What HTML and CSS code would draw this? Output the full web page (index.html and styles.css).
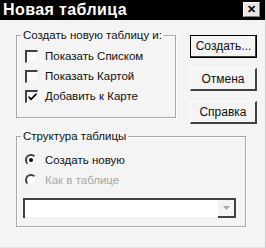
FILE: index.html
```html
<!DOCTYPE html>
<html lang="ru">

<head>
    <meta charset="UTF-8">
    <title>Новая таблица</title>
    <link rel="stylesheet" href="styles.css">
</head>

<body>
    <div class="window">
        <div class="titlebar">
            <span class="title">Новая таблица</span>
            <span class="close">&#x2715;</span>
        </div>

        <div class="content">
            <div class="toprow">
                <fieldset class="group group1">
                    <legend>Создать новую таблицу и:</legend>
                    <div class="option"><span class="check"></span>Показать Списком</div>
                    <div class="option"><span class="check"></span>Показать Картой</div>
                    <div class="option">
                        <span class="check">
                            <svg width="9" height="9" viewBox="0 0 9 9">
                                <path d="M0.5 3.5 L3 6 L8.5 0.5 L8.5 3 L3 8.5 L0.5 6 Z" fill="#000" />
                            </svg>
                        </span>Добавить к Карте
                    </div>
                </fieldset>

                <div class="buttons">
                    <div class="button default">Создать...</div>
                    <div class="button">Отмена</div>
                    <div class="button">Справка</div>
                </div>
            </div>

            <fieldset class="group group2">
                <legend>Структура таблицы</legend>
                <div class="option"><span class="radio on"></span>Создать новую</div>
                <div class="option disabled"><span class="radio"></span>Как в таблице</div>
                <div class="combo">
                    <span class="combo-text"></span>
                    <span class="combo-btn">
                        <svg width="7" height="4" viewBox="0 0 7 4">
                            <path d="M0 0 L7 0 L3.5 4 Z" fill="#a8a8a8" />
                        </svg>
                    </span>
                </div>
            </fieldset>
        </div>
    </div>
</body>

</html>
```

FILE: styles.css
```css
body {
    margin: 0;
    background: #f4f4f4;
    font-family: "Liberation Sans", Arial, sans-serif;
    font-size: 11.5px;
    color: #101010;
}

.window {
    width: 266px;
    height: 248px;
    box-sizing: border-box;
    background: #f4f4f4;
    border-right: 1px solid #d0d0d0;
    border-bottom: 1px solid #e0e0e0;
}

.titlebar {
    height: 20px;
    background: #000;
    display: flex;
    align-items: center;
    justify-content: space-between;
    padding: 0 5px 0 3px;
}

.title {
    color: #fff;
    font-weight: bold;
    font-size: 16px;
    letter-spacing: 0.4px;
}

.close {
    width: 15px;
    height: 13px;
    margin-top: -2px;
    background: #e8e8e8;
    border: 1px solid #fff;
    border-right-color: #808080;
    border-bottom-color: #808080;
    color: #000;
    font-size: 11px;
    font-weight: bold;
    line-height: 13px;
    text-align: center;
}

.content {
    padding: 9px 0 0 16px;
}

.toprow {
    display: flex;
    align-items: flex-start;
    gap: 14px;
    height: 93px;
}

.group {
    margin: 0;
    padding: 0 0 0 8px;
    border: 1px solid #a8a8a8;
    box-shadow: 1px 1px 0 #fff, inset 1px 1px 0 #fff;
}

.group legend {
    padding: 0 2px;
    margin-left: -4px;
    line-height: 12px;
}

.group1 {
    width: 150px;
    height: 82px;
    padding-top: 5px;
}

.group2 {
    width: 220px;
    height: 87px;
    margin-top: 8px;
    padding-top: 8px;
}

.option {
    display: flex;
    align-items: center;
    height: 20px;
}

.option.disabled {
    color: #a8a8a8;
}

.check {
    width: 10px;
    height: 10px;
    margin-right: 7px;
    background: #fafafa;
    border-top: 2px solid #404040;
    border-left: 2px solid #404040;
    border-right: 1px solid #f0f0f0;
    border-bottom: 1px solid #f0f0f0;
    display: flex;
    align-items: center;
    justify-content: center;
}

.radio {
    width: 8px;
    height: 8px;
    margin-right: 8px;
    border-radius: 50%;
    border: 2px solid;
    border-color: #404040 #f4f4f4 #f4f4f4 #404040;
    background: #fff;
    position: relative;
}

.radio.on::after {
    content: "";
    position: absolute;
    left: 2px;
    top: 2px;
    width: 4px;
    height: 4px;
    border-radius: 50%;
    background: #000;
}

.buttons {
    display: flex;
    flex-direction: column;
    gap: 10px;
    padding-top: 6px;
}

.button {
    width: 64px;
    height: 20px;
    line-height: 20px;
    text-align: center;
    font-size: 12px;
    border: 1px solid #fff;
    border-right: 2px solid #404040;
    border-bottom: 2px solid #404040;
}

.button.default {
    border: 1px solid #000;
    box-shadow: inset -1px -1px 0 #404040;
    width: 65px;
    height: 21px;
}

.combo {
    display: flex;
    width: 211px;
    height: 18px;
    margin-top: 8px;
    margin-left: -2px;
    border-top: 2px solid #404040;
    border-left: 2px solid #404040;
    background: #fff;
}

.combo-text {
    flex: 1;
    border-bottom: 1px solid #f0f0f0;
}

.combo-btn {
    width: 16px;
    display: flex;
    align-items: center;
    justify-content: center;
    border-right: 2px solid #404040;
    border-bottom: 2px solid #404040;
    background: #f4f4f4;
}
```
